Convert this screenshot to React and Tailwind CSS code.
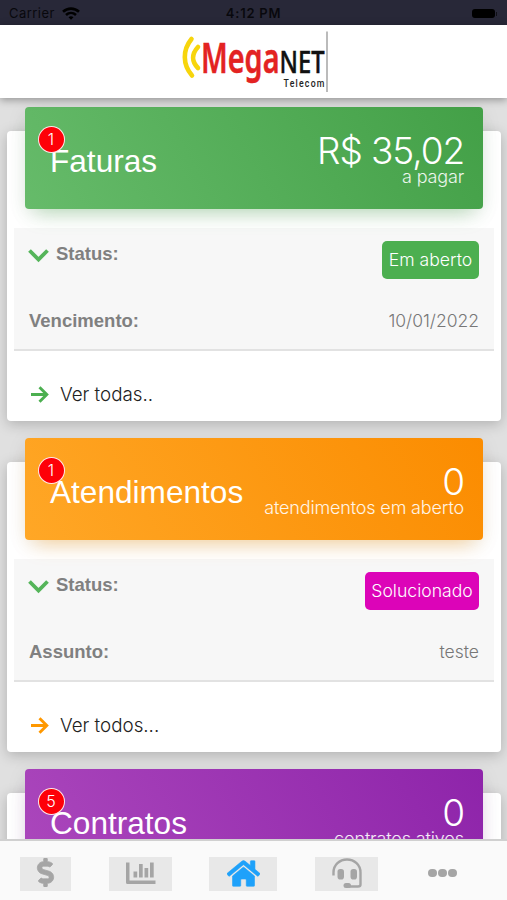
import { FaHome, FaDollarSign } from "react-icons/fa";

const cards = [
  {
    title: "Faturas",
    count: 1,
    total: "R$ 35,02",
    caption: "a pagar",
    banner:
      "bg-linear-[60deg,#66bb6a,#43a047] shadow-[0_12px_20px_-10px_rgba(76,175,80,0.4),0_4px_20px_0_rgba(0,0,0,0.08)]",
    status: "Em aberto",
    statusStyle: "bg-[#4caf50] w-[97px]",
    label: "Vencimento:",
    value: "10/01/2022",
    link: "Ver todas..",
    arrow: "text-[#4caf50]",
  },
  {
    title: "Atendimentos",
    count: 1,
    total: "0",
    caption: "atendimentos em aberto",
    banner:
      "bg-linear-[60deg,#ffa726,#fb8c00] shadow-[0_12px_20px_-10px_rgba(255,152,0,0.4),0_4px_20px_0_rgba(0,0,0,0.08)]",
    status: "Solucionado",
    statusStyle: "bg-[#dc04b8] w-[114px]",
    label: "Assunto:",
    value: "teste",
    link: "Ver todos...",
    arrow: "text-[#ff9800]",
  },
  {
    title: "Contratos",
    count: 5,
    total: "0",
    caption: "contratos ativos",
    banner:
      "bg-linear-[60deg,#ab47bc,#8e24aa] shadow-[0_12px_20px_-10px_rgba(156,39,176,0.4),0_4px_20px_0_rgba(0,0,0,0.08)]",
    status: "Ativo",
    statusStyle: "bg-[#4caf50] w-[97px]",
    label: "Plano:",
    value: "",
    link: "Ver todos...",
    arrow: "text-[#9c27b0]",
  },
];

function StatusBar() {
  return (
    <div className="grid h-[25px] shrink-0 grid-cols-3 items-center bg-[#282838] px-[9px] pt-[2px] text-[13px] text-[#08080d]">
      <div className="flex items-center gap-[7px]">
        <span className="font-['Inter'] tracking-[0.45px]">Carrier</span>
        <svg width="18" height="13" viewBox="0 0 18 13" fill="none" stroke="#000" strokeWidth="2.6">
          <path d="M1 4.800C5.500.600 12.500.600 17 4.800" />
          <path d="M4 8C7 5.300 11 5.300 14 8" />
          <path d="M9 12.800 6.500 10.200q2.500-2 5 0z" fill="#000" stroke="none" />
        </svg>
      </div>
      <span className="text-center font-['Inter'] font-semibold tracking-[0.75px]">4:12 PM</span>
      <div className="flex items-center justify-end gap-px pr-[1px]">
        <div className="h-[9px] w-[23px] rounded-[3px] bg-black" />
        <div className="h-1 w-[1px] bg-black/60" />
      </div>
    </div>
  );
}

function Logo() {
  return (
    <svg width="150" height="62" viewBox="180 31 150 62">
      <g fill="none" stroke="#f7d50c" strokeWidth="4.6" strokeLinecap="round">
        <path d="M191.500 39C182.500 50 182.500 64.500 192 75.500" />
        <path d="M198 47C191.500 54 191.500 61.500 198 68" />
      </g>
      <text x="201" y="73" fontFamily="Noto Sans" fontSize="42" fontWeight="600" fill="#e32322" stroke="#e32322" strokeWidth="0.5" textLength="78.5" lengthAdjust="spacingAndGlyphs">
        Mega
      </text>
      <text x="279.500" y="73" fontFamily="Noto Sans" fontSize="31.500" fontWeight="500" fill="#111" stroke="#111" strokeWidth="0.5" textLength="45" lengthAdjust="spacingAndGlyphs">
        NET
      </text>
      <text transform="translate(283.5 87) scale(0.76 1)" fontFamily="Roboto" fontSize="11.500" fontWeight="500" fill="#222" letterSpacing="1.600">
        Telecom
      </text>
      <path d="M327 31.500V92" stroke="#aaa" strokeWidth="1.600" />
    </svg>
  );
}

function Card({ card }) {
  return (
    <section className="h-[290px] shrink-0 rounded-[4px] bg-white px-[7px] shadow-[0_3px_14px_rgba(0,0,0,0.22)]">
      <div
        className={`relative mx-[11px] -mt-6 flex h-[102px] justify-between rounded-[4px] pr-[19px] pl-[25px] text-white ${card.banner}`}
      >
        <h2 className="pt-[36px] text-[31.6px] leading-[36px]">{card.title}</h2>
        <div className="flex flex-col items-end pt-[23px] font-['Inter'] font-light">
          <span className="text-[37px] leading-[42px] tracking-[-1.1px]">{card.total}</span>
          <span className="-mt-[5px] text-[18px] leading-5 tracking-[-0.15px] text-white/90">{card.caption}</span>
        </div>
        <span className="absolute top-[18.5px] left-[12.5px] flex size-[27px] items-center justify-center rounded-full border-[1.5px] border-white/90 bg-[#fe0008] font-['Inter'] text-[16px] font-light">
          {card.count}
        </span>
      </div>

      <div className="mt-[19px] h-[123px] border-b-2 border-[#e2e2e2] bg-[#f7f7f7] pr-[15px] pl-[15px]">
        <div className="flex h-[66px] items-start justify-between pt-[13px]">
          <div className="-ml-px flex items-center gap-[7px] pt-px">
            <svg width="21" height="15" viewBox="0 0 21 15" className="mt-[3px]">
              <path d="M1.500 2.500 10.500 11.500 19.500 2.500" fill="none" stroke="#55b55a" strokeWidth="3.800" />
            </svg>
            <span className="text-[18.5px] leading-6 font-bold text-[#808080]">Status:</span>
          </div>
          <span
            className={`flex h-[38px] items-center justify-center rounded-[5px] font-['Inter'] text-[17.6px] font-light whitespace-nowrap text-white ${card.statusStyle}`}
          >
            {card.status}
          </span>
        </div>
        <div className="flex items-center justify-between pt-[15px]">
          <span className="text-[18.5px] leading-6 font-bold text-[#808080]">{card.label}</span>
          <span className="font-['Inter'] text-[17.5px] leading-6 font-light text-[#777]">{card.value}</span>
        </div>
      </div>

      <div className="flex items-center gap-[11px] pt-[31px] pl-[17px]">
        <svg width="18" height="18" viewBox="0 0 18 18" className={card.arrow}>
          <path d="M0 8.500h16M8.500 1.200l7.300 7.300-7.300 7.300" fill="none" stroke="currentColor" strokeWidth="2.900" />
        </svg>
        <span className="pt-px font-['Inter'] text-[18.8px] leading-6 font-light text-[#222]">{card.link}</span>
      </div>
    </section>
  );
}

function TabBar() {
  return (
    <nav className="z-10 flex h-[61px] shrink-0 items-start border-t-2 border-[#d0d0d0] bg-[#fafafa] pt-4 pl-5 text-[#a5a5a5]">
      <button className="flex h-[34px] w-[51px] items-center justify-center bg-[#e8e8e8] pb-[3px]">
        <FaDollarSign size={29} stroke="currentColor" strokeWidth={14} />
      </button>
      <button className="ml-[38px] flex h-[34px] w-[63px] items-center justify-center bg-[#e8e8e8] pb-[3px]">
        <svg width="30" height="24" viewBox="0 0 30 24" fill="currentColor">
          <path d="M0 1.500h3.500v18h26v3.500H1.500Q0 23 0 21.500zM7.500 10.500h3.700v6H7.500zM13 3h3.700v13.500H13zM18.500 7h3.700v9.500h-3.700zM24 1.500h3.700v15H24z" />
        </svg>
      </button>
      <button className="ml-[37px] flex h-[34px] w-[68px] items-center justify-center bg-[#e8e8e8] pb-px text-[#1ea1fa]">
        <FaHome size={33} stroke="currentColor" strokeWidth={10} />
      </button>
      <button className="ml-[38px] flex h-[34px] w-[63px] items-center justify-center bg-[#e8e8e8] pb-[2px]">
        <svg width="30" height="31" viewBox="0 0 30 31" fill="none" stroke="currentColor">
          <path d="M1.500 17.500V14.500C1.500 7 7.500 1.500 15 1.500S28.500 7 28.500 14.500V26.500Q28.500 28.500 26 28.500H17" strokeWidth="2.400" />
          <rect x="5.500" y="11" width="6.500" height="10.500" rx="2.800" fill="currentColor" stroke="none" />
          <rect x="18.500" y="11" width="6.500" height="10.500" rx="2.800" fill="currentColor" stroke="none" />
          <rect x="11.500" y="25" width="7.500" height="5" rx="2.500" fill="currentColor" stroke="none" />
        </svg>
      </button>
      <button className="ml-[50px] flex h-[32px] items-center gap-[1.5px]">
        <span className="size-[8.5px] rounded-full bg-current" />
        <span className="size-[8.5px] rounded-full bg-current" />
        <span className="size-[8.5px] rounded-full bg-current" />
      </button>
    </nav>
  );
}

export default function App() {
  return (
    <div className="flex h-[900px] w-[507px] flex-col overflow-hidden bg-[#e0e0e0] font-['Liberation_Sans',sans-serif]">
      <StatusBar />
      <header className="z-10 flex h-[73px] shrink-0 justify-center bg-white pt-[6px] pl-[3px] shadow-[0_2px_8px_rgba(0,0,0,0.35)]">
        <Logo />
      </header>
      <main className="flex min-h-0 flex-1 flex-col gap-[41px] overflow-hidden pt-[33px] pr-[6px] pl-[7px]">
        {cards.map((card) => (
          <Card key={card.title} card={card} />
        ))}
      </main>
      <TabBar />
    </div>
  );
}
